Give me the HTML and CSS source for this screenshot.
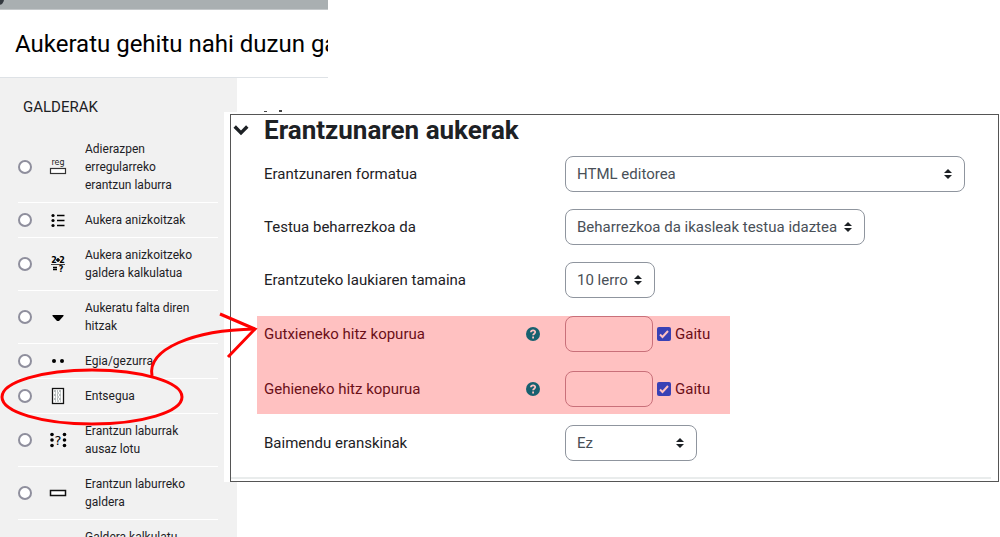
FILE: index.html
```
<!DOCTYPE html>
<html lang="eu">
<head>
    <meta charset="UTF-8">
    <meta name="viewport" content="width=device-width, initial-scale=1.0">
    <title>Aukeratu gehitu nahi duzun galdera mota</title>
    <link rel="stylesheet" href="styles.css">
</head>
<body>
    <header class="chooser-header">
        <div class="backdrop"><span class="corner"></span></div>
        <h1>Aukeratu gehitu nahi duzun galdera mota</h1>
    </header>

    <main class="chooser-body">
        <section class="types">
            <h2>GALDERAK</h2>
            <ul>
                <li>
                    <label>
                        <input type="radio" name="qtype">
                        <svg class="icon" viewBox="0 0 18 18">
                            <text class="reg" x="9" y="7" text-anchor="middle">reg</text>
                            <rect x="1.5" y="10.5" width="15" height="5" fill="#fff" stroke="#333" stroke-width="1.2"/>
                        </svg>
                        <span>Adierazpen erregularreko erantzun laburra</span>
                    </label>
                </li>
                <li>
                    <label>
                        <input type="radio" name="qtype">
                        <svg class="icon" viewBox="0 0 18 18">
                            <circle cx="4" cy="4.500" r="1.600"/><circle cx="4" cy="9.500" r="1.600"/><circle cx="4" cy="14.500" r="1.600"/>
                            <path d="M8 4.500h7.500M8 9.500h7.500M8 14.500h7.500" stroke="#000" stroke-width="1.3"/>
                        </svg>
                        <span>Aukera anizkoitzak</span>
                    </label>
                </li>
                <li>
                    <label>
                        <input type="radio" name="qtype">
                        <svg class="icon" viewBox="0 0 18 18">
                            <text class="calc" x="5" y="8" text-anchor="middle">2</text>
                            <path d="M7 5h4M9 3v4" stroke="#000" stroke-width="1.5"/>
                            <text class="calc" x="13" y="8" text-anchor="middle">2</text>
                            <path d="M2 9.500h14" stroke="#444"/>
                            <path d="M4 12.500h4M4 14.500h4" stroke="#000" stroke-width="1.5"/>
                            <text class="calc" x="12" y="17" text-anchor="middle">?</text>
                        </svg>
                        <span>Aukera anizkoitzeko galdera kalkulatua</span>
                    </label>
                </li>
                <li>
                    <label>
                        <input type="radio" name="qtype">
                        <svg class="icon" viewBox="0 0 18 18"><path d="M3.500 7h11v1l-4.500 5h-2l-4.500-5z"/></svg>
                        <span>Aukeratu falta diren hitzak</span>
                    </label>
                </li>
                <li>
                    <label>
                        <input type="radio" name="qtype">
                        <svg class="icon" viewBox="0 0 18 18"><circle cx="5" cy="9" r="2"/><circle cx="13" cy="9" r="2"/></svg>
                        <span>Egia/gezurra</span>
                    </label>
                </li>
                <li>
                    <label>
                        <input type="radio" name="qtype">
                        <svg class="icon" viewBox="0 0 18 18">
                            <rect x="3.500" y="1.500" width="11" height="15" fill="#fff" stroke="#111" stroke-width="1.300"/>
                            <path d="M5 4h8M5 8h8M5 12h8" stroke="#6d7878" stroke-dasharray="2 1 1 1"/>
                            <path d="M6 6h7M6 10h7M6 14h7" stroke="#8d9898" stroke-dasharray="1 1 2 1"/>
                        </svg>
                        <span>Entsegua</span>
                    </label>
                </li>
                <li>
                    <label>
                        <input type="radio" name="qtype">
                        <svg class="icon" viewBox="0 0 18 18">
                            <circle cx="3" cy="3.500" r="1.800"/><circle cx="3" cy="9" r="1.800"/><circle cx="3" cy="14.500" r="1.800"/>
                            <circle cx="15.500" cy="3.500" r="1.800"/><circle cx="15.500" cy="9" r="1.800"/><circle cx="15.500" cy="14.500" r="1.800"/>
                            <text class="match" x="9" y="14" text-anchor="middle">?</text>
                        </svg>
                        <span>Erantzun laburrak ausaz lotu</span>
                    </label>
                </li>
                <li>
                    <label>
                        <input type="radio" name="qtype">
                        <svg class="icon" viewBox="0 0 18 18"><rect x="1.500" y="6.500" width="15" height="5" fill="#fff" stroke="#111" stroke-width="1.500"/></svg>
                        <span>Erantzun laburreko galdera</span>
                    </label>
                </li>
                <li>
                    <label>
                        <input type="radio" name="qtype">
                        <svg class="icon" viewBox="0 0 18 18"></svg>
                        <span>Galdera kalkulatu sinplea</span>
                    </label>
                </li>
            </ul>
        </section>

        <section class="settings">
            <form class="panel">
                <h2>
                    <svg class="chevron" viewBox="0 0 14 10"><path d="M1.500 2l5.500 5.500l5.500-5.500" fill="none" stroke="#1d2125" stroke-width="3"/></svg>
                    Erantzunaren aukerak
                </h2>
                <div class="row">
                    <label for="format">Erantzunaren formatua</label>
                    <select id="format" class="wide"><option>HTML editorea</option></select>
                </div>
                <div class="row">
                    <label for="required">Testua beharrezkoa da</label>
                    <select id="required"><option>Beharrezkoa da ikasleak testua idaztea</option></select>
                </div>
                <div class="row">
                    <label for="size">Erantzuteko laukiaren tamaina</label>
                    <select id="size"><option>10 lerro</option></select>
                </div>
                <div class="highlight">
                    <div class="row">
                        <label for="minwords">Gutxieneko hitz kopurua</label>
                        <button type="button" class="help" aria-label="Laguntza">
                            <svg viewBox="0 0 14 14"><circle cx="7" cy="7" r="7" fill="#17606f"/><path d="M4.900 5.300c.2-2.700 4.500-2.500 4.300 0c-.1 1.400-2 1.300-2.100 2.900M7.100 9.500v2" fill="none" stroke="#ffc1c1" stroke-width="1.800"/></svg>
                        </button>
                        <input type="text" id="minwords">
                        <label class="enable"><input type="checkbox" checked> Gaitu</label>
                    </div>
                    <div class="row">
                        <label for="maxwords">Gehieneko hitz kopurua</label>
                        <button type="button" class="help" aria-label="Laguntza">
                            <svg viewBox="0 0 14 14"><circle cx="7" cy="7" r="7" fill="#17606f"/><path d="M4.900 5.300c.2-2.700 4.500-2.500 4.300 0c-.1 1.400-2 1.300-2.100 2.900M7.100 9.500v2" fill="none" stroke="#ffc1c1" stroke-width="1.800"/></svg>
                        </button>
                        <input type="text" id="maxwords">
                        <label class="enable"><input type="checkbox" checked> Gaitu</label>
                    </div>
                </div>
                <div class="row">
                    <label for="attachments">Baimendu eranskinak</label>
                    <select id="attachments" class="medium"><option>Ez</option></select>
                </div>
                <hr>
            </form>
        </section>
    </main>

    <!-- red ellipse and arrow -->
    <svg class="annotation" width="260" height="430" viewBox="0 0 260 430">
        <ellipse cx="92" cy="397" rx="90" ry="27"/>
        <path d="M152 376C147 349 193 330 255 329"/>
        <path d="M220 314L255 329L228 357"/>
    </svg>
</body>
</html>
```
FILE: styles.css
```
* { box-sizing: border-box; }
body { margin: 0; height: 100vh; overflow: hidden; position: relative; display: flex; flex-direction: column; background: #fff; color: #1d2125; font-family: Roboto, "Liberation Sans", sans-serif; font-size: 15px; }
h1, h2, ul { margin: 0; padding: 0; font-weight: 400; }

/* chooser header */
.chooser-header { width: 328px; flex: none; overflow: hidden; border-bottom: 1px solid #dee2e6; }
.backdrop { position: relative; height: 10px; background: #a9afb1; border-bottom: 1px solid #c4c8ca; }
.corner { position: absolute; left: -7px; top: -6px; width: 11px; height: 11px; border-radius: 50%; background: #343a40; }
.chooser-header h1 { padding: 2px 15px 1px; font-size: 24px; line-height: 64px; color: #000; white-space: nowrap; }

.chooser-body { flex: 1; display: flex; align-items: flex-start; min-height: 0; }

/* question types */
.types { width: 237px; height: 100%; flex: none; overflow: hidden; padding: 19px 19px 0 18px; background: #f1f1f1; }
.types h2 { padding-left: 5px; font-size: 15px; line-height: 20px; margin-bottom: 15px; }
.types ul { list-style: none; }
.types li { border-bottom: 1px solid #fff; }
.types label { display: flex; align-items: center; padding: 8px 20px 8px 0; font-size: 12px; line-height: 18px; }
.types input { appearance: none; width: 14px; height: 14px; flex: none; margin: 0; border: 2px solid #8f8f9d; border-radius: 50%; background: #fff; }
.types input:checked { background: #3841b5; }
.icon { width: 18px; height: 18px; flex: none; margin: 0 18px 0 17px; }
.reg { font: 8px "DejaVu Sans", sans-serif; fill: #222; }
.calc { font: bold 8px "DejaVu Sans", sans-serif; }
.match { font: 13px "DejaVu Sans", sans-serif; }

/* settings panel */
.settings { flex: 1; position: relative; margin: 34px 0 0 -13px; padding: 2px 1px 0 6px; background: #fff; }
/* bottoms of the letters in the line the panel covers */
.settings::before { content: ""; position: absolute; left: 40px; top: -2px; width: 18px; height: 2px; background: linear-gradient(#444, #444) left bottom / 3px 1px no-repeat, linear-gradient(#444, #444) right bottom / 3px 2px no-repeat; }
.panel { border: 1px solid #555; padding-left: 33px; }
.panel h2 { display: flex; align-items: center; margin: 0 0 11px -31px; font-size: 26px; font-weight: 700; line-height: 30px; }
.chevron { width: 16px; height: 12px; margin-right: 15px; }
.row { display: flex; align-items: center; margin-bottom: 17px; }
.row > label:first-child { width: 301px; flex: none; }
select, input[type="text"] { height: 36px; border: 1px solid #8f959e; border-radius: 8px; font: inherit; color: #495057; }
select { appearance: none; padding: 0 26px 0 11px; background: #fff url("data:image/svg+xml,%3Csvg xmlns='http://www.w3.org/2000/svg' viewBox='0 0 8 10'%3E%3Cpath d='M4 0L0 4h8zM4 10L0 6h8z' fill='%231d2125'/%3E%3C/svg%3E") no-repeat right 12px center / 8px 10px; }
.wide { width: 400px; }
.medium { width: 132px; }

.highlight { width: 473px; margin: 18px 0 11px -7px; padding: 0 0 7px 7px; background: #ffc1c1; color: #6b0f18; }
.highlight .row { margin-bottom: 19px; }
.highlight .row:last-child { margin-bottom: 0; }
.highlight .row > label:first-child { width: 262px; }
.highlight input[type="text"] { width: 88px; border-color: #c9707a; background: transparent; }
.help { width: 14px; height: 14px; margin-right: 25px; padding: 0; border: 0; background: none; cursor: pointer; }
.help svg { display: block; }
.enable { display: flex; align-items: center; gap: 4px; margin-left: 4px; }
.enable input { appearance: none; width: 14px; height: 14px; margin: 0; border-radius: 2px; background: #fff; }
.enable input:checked { background: #3841b5 url("data:image/svg+xml,%3Csvg xmlns='http://www.w3.org/2000/svg' viewBox='0 0 14 14'%3E%3Cpath d='M3 7.500l2.500 2.500L11 4' fill='none' stroke='%23ffc1c1' stroke-width='2'/%3E%3C/svg%3E"); }
.panel > .row:nth-last-child(2) { margin-bottom: 16px; }
hr { height: 2px; margin: 0 7px 2px -33px; border: 0; background: #e9ecec; }

.annotation { position: absolute; left: 0; top: 0; fill: none; stroke: #f00; stroke-width: 3; pointer-events: none; }
```
